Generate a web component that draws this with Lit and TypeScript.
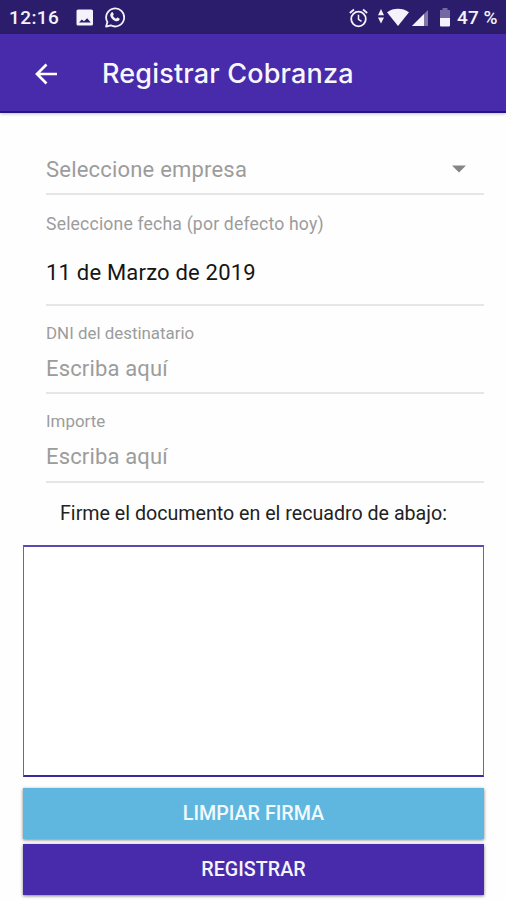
import { LitElement, html, css } from "lit";
import { customElement, property } from "lit/decorators.js";

@customElement("status-bar")
class StatusBar extends LitElement {
  static styles = css`
    :host {
      display: flex;
      align-items: center;
      height: 34px;
      background: #2b1d6c;
      color: #f4f2fa;
      font: 500 19px/34px Roboto, sans-serif;
      padding: 1px 6px 0 9px;
      box-sizing: border-box;
    }
    svg { display: block; flex: none; }
    .time { width: 67px; letter-spacing: 0.4px; }
    .chat { margin-left: 11px; }
    .gap { flex: 1; }
    .data { margin-left: 8px; }
    .signal { margin-left: 2px; }
    .battery { margin-left: 10px; }
    .level { margin-left: 6px; width: 43px; white-space: nowrap; letter-spacing: 0.1px; }
  `;
  render() {
    return html`
      <span class="time">12:16</span>
      <svg width="18" height="18" viewBox="0 0 18 18">
        <rect x="0.5" y="0.5" width="16.5" height="16" rx="1.6" fill="#f4f2fa" />
        <path d="M3 13.500 5.800 10.500l2.200 1.800 3.200-3 3.500 4.200z" fill="#2b1d6c" />
      </svg>
      <svg class="chat" width="20" height="21" viewBox="0 0 20 21">
        <path d="M1.1 19.6 2.4 15A9 9 0 1 1 5.8 18.3z" fill="none" stroke="#f4f2fa" stroke-width="1.8" stroke-linejoin="round" />
        <path d="M6.5 5.4c.6-.5 1.2-.3 1.500.3l.7 1.600c.1.500-.5 1.100-.8 1.500.7 1.400 1.900 2.400 3.200 2.900.5-.4.9-1.200 1.400-1.100l1.900.9c.4.300.1 1.500-.4 2-1.200 1.100-3 1-4.900-.1-2-1.100-3.400-2.900-3.800-4.700-.2-1.200.3-2.600 1.200-3.300z" fill="#f4f2fa" />
      </svg>
      <span class="gap"></span>
      <svg width="19" height="20" viewBox="0 0 19 20">
        <circle cx="9.500" cy="11" r="7.300" fill="none" stroke="#f4f2fa" stroke-width="1.800" />
        <path d="M9.500 6.800v4.600l3 1.900" fill="none" stroke="#f4f2fa" stroke-width="1.500" />
        <path d="M.8 5 5 1.500M18.200 5 14 1.500" stroke="#f4f2fa" stroke-width="1.800" />
      </svg>
      <svg class="data" width="11" height="20" viewBox="0 0 11 20">
        <path d="M5 1 8 7.200H2zM2 9.500h6l-3 6z" fill="#f4f2fa" />
      </svg>
      <svg width="22" height="20" viewBox="0 0 22 20">
        <path d="M0 4.300C6.400-.3 15.600-.3 22 4.300L11 18z" fill="#f4f2fa" />
      </svg>
      <svg class="signal" width="18" height="18" viewBox="0 0 18 18">
        <path d="M17 1v16H1z" fill="#7f76a8" />
        <path d="M13 5v12H1z" fill="#f4f2fa" />
      </svg>
      <svg class="battery" width="12" height="20" viewBox="0 0 12 20">
        <path d="M3.500 0h5v2H11v8H1V2h2.500z" fill="#7268a2" />
        <path d="M1 10h10v7.500q0 1-1 1H2q-1 0-1-1z" fill="#f4f2fa" />
      </svg>
      <span class="level">47 %</span>
    `;
  }
}

@customElement("form-field")
class FormField extends LitElement {
  @property() label = "";
  @property() value = "";
  static styles = css`
    :host {
      display: flex;
      flex-direction: column;
      border-bottom: 2px solid #e6e6e6;
      box-sizing: border-box;
      color: #9c9c9c;
    }
    .label { font-size: 16.9px; line-height: 23px; }
    .value { font-size: 22px; line-height: 30px; margin-top: 9px; letter-spacing: 0.16px; }
  `;
  render() {
    return html`<span class="label">${this.label}</span><span class="value">${this.value}</span>`;
  }
}

@customElement("app-root")
class AppRoot extends LitElement {
  static styles = css`
    :host {
      display: flex;
      flex-direction: column;
      height: 900px;
      background: #fefefe;
      font-family: Roboto, sans-serif;
      overflow: hidden;
    }
    .header {
      display: flex;
      align-items: center;
      height: 79px;
      box-sizing: border-box;
      background: #472bab;
      border-bottom: 2px solid #2a128c;
      box-shadow: 0 1px 3px rgba(0, 0, 0, 0.25);
      padding: 2px 0 0 34px;
      flex: none;
    }
    .title {
      margin: 0 0 0 44px;
      color: #f8f6fd;
      font: 500 27px/36px Inter, Roboto, sans-serif;
      letter-spacing: 0.17px;
      white-space: nowrap;
    }
    .form {
      display: flex;
      flex-direction: column;
      padding: 0 22px 0 46px;
    }
    .select {
      display: flex;
      align-items: center;
      justify-content: space-between;
      height: 82px;
      box-sizing: border-box;
      padding: 32px 18px 0 0;
      border-bottom: 2px solid #e6e6e6;
      color: #9c9c9c;
      font-size: 22px;
      letter-spacing: 0.2px;
    }
    .date {
      display: flex;
      flex-direction: column;
      height: 111px;
      box-sizing: border-box;
      padding-top: 17px;
      border-bottom: 2px solid #e6e6e6;
    }
    .date-label { font-size: 17.6px; line-height: 24px; color: #9c9c9c; letter-spacing: 0.18px; }
    .date-value { font-size: 22px; line-height: 30px; margin-top: 22px; color: #151515; letter-spacing: 0.2px; }
    .field { height: 88px; padding-top: 16px; }
    .field.last { height: 89px; }
    .hint {
      margin: 17px 0 0 1px;
      text-align: center;
      font-size: 19.65px;
      line-height: 28px;
      color: #222;
      white-space: nowrap;
    }
    .pad {
      margin: 17px 22px 0 23px;
      height: 232px;
      box-sizing: border-box;
      border: 1px solid #6a60bd;
      border-top: 2px solid #584bb0;
      border-bottom: 2px solid #3a2a9c;
      background: #fff;
    }
    .button {
      margin: 11px 22px 0 23px;
      height: 51px;
      padding: 0;
      border: 0;
      flex: none;
      background: #5fb6df;
      color: #f2fafd;
      font: 500 19.7px/49px Roboto, sans-serif;
      box-shadow: 0 1px 3px rgba(0, 0, 0, 0.5);
    }
    .button.primary {
      margin-top: 5px;
      background: #472bab;
      color: #f6f3fd;
    }
  `;
  render() {
    return html`
      <status-bar></status-bar>
      <header class="header">
        <svg width="24" height="22" viewBox="0 0 24 22">
          <path d="M23 11H3M12.500 1.500 3 11l9.500 9.500" fill="none" stroke="#fff" stroke-width="2.700" />
        </svg>
        <h1 class="title">Registrar Cobranza</h1>
      </header>
      <div class="form">
        <div class="select">
          <span>Seleccione empresa</span>
          <svg width="14" height="8" viewBox="0 0 14 8"><path d="M0 .5h14L7 7.500z" fill="#858585" /></svg>
        </div>
        <div class="date">
          <span class="date-label">Seleccione fecha (por defecto hoy)</span>
          <span class="date-value">11 de Marzo de 2019</span>
        </div>
        <form-field class="field" label="DNI del destinatario" value="Escriba aquí"></form-field>
        <form-field class="field last" label="Importe" value="Escriba aquí"></form-field>
      </div>
      <p class="hint">Firme el documento en el recuadro de abajo:</p>
      <div class="pad"></div>
      <button class="button">LIMPIAR FIRMA</button>
      <button class="button primary">REGISTRAR</button>
    `;
  }
}
